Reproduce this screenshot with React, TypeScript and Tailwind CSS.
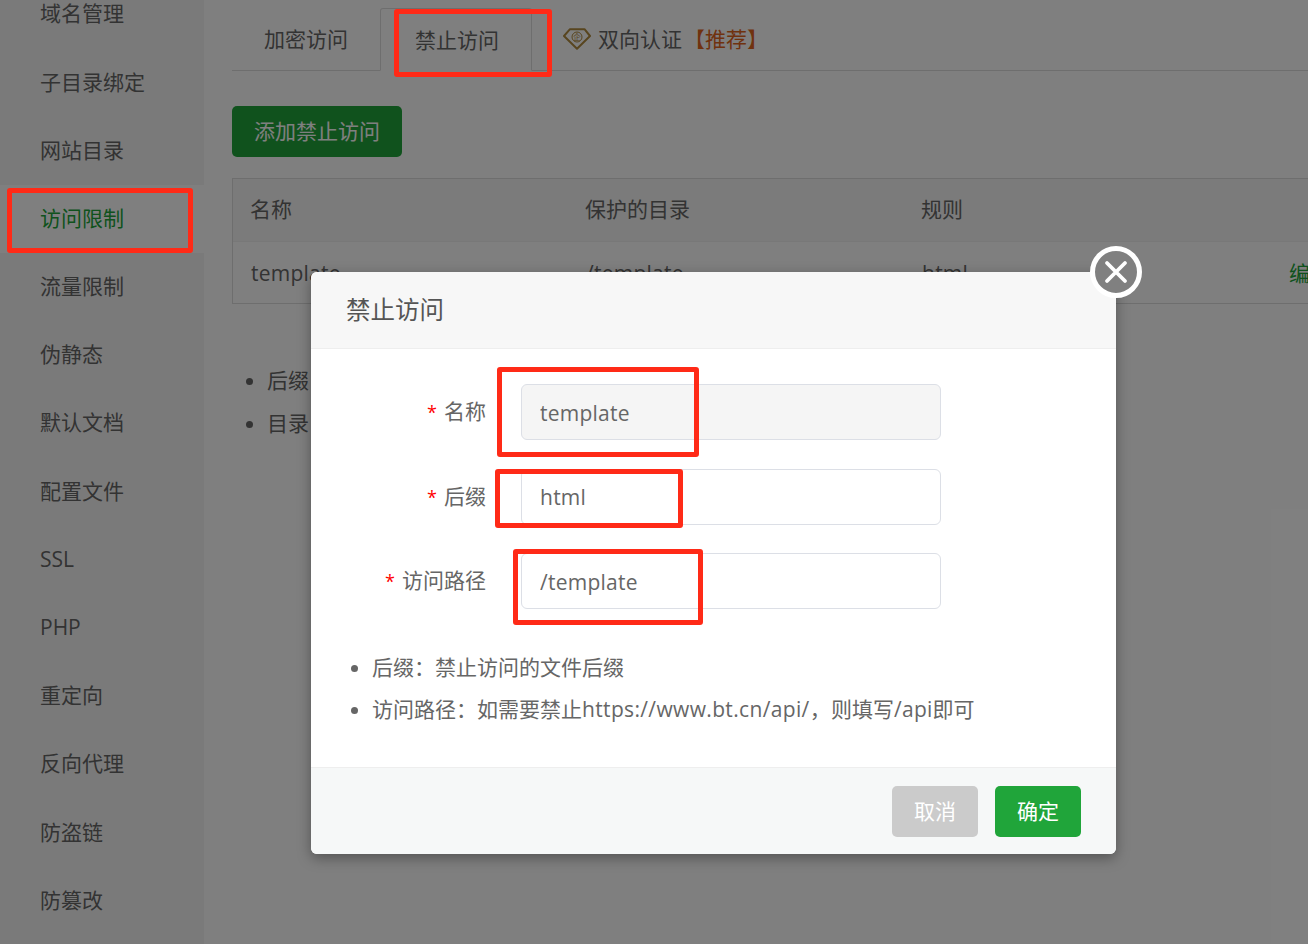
const sideItems = ['域名管理','子目录绑定','网站目录','访问限制','流量限制','伪静态','默认文档','配置文件','SSL','PHP','重定向','反向代理','防盗链','防篡改',''];

function Field({ label, value, disabled }: { label: string; value: string; disabled?: boolean }) {
  return (
    <div className="flex items-center h-[56px]">
      <label className="w-[175px] text-right text-[21px] text-[#666] shrink-0">
        <span className="text-[#f00] text-[18px] mr-[7px]">*</span>{label}
      </label>
      <input readOnly value={value} className={`ml-[35px] w-[420px] h-[56px] border border-[#dcdfe6] rounded-[6px] px-[18px] pt-[1px] text-[21px] tracking-[0.25px] text-[#666] outline-none ${disabled ? 'bg-[#f5f5f5]' : 'bg-white'}`} />
    </div>
  );
}

export default function App() {
  return (
    <div className="relative w-[1308px] h-[944px] overflow-hidden bg-white font-['Open_Sans','Noto_Sans_CJK_SC',sans-serif] text-[21px] text-[#666]">
      <div className="flex h-full">
        <aside className="w-[204px] shrink-0 bg-[#f5f5f5] -mt-[20px] h-[964px]">
          {sideItems.map((s, i) => (
            <div key={i} className={`h-[68.2px] flex items-center pl-[40px] ${s === '访问限制' ? 'bg-white text-[#20a53a]' : ''}`}>{s}</div>
          ))}
        </aside>
        <main className="flex-1 pl-[28px] pt-[8px] min-w-0">
          <div className="flex h-[63px] border-b border-[#ddd]">
            <div className="w-[148px] pl-[32px] pt-[2px] flex items-center">加密访问</div>
            <div className="w-[152px] h-[63px] pl-[34px] pt-[2px] flex items-center border border-[#ddd] border-b-white rounded-t-[3px] bg-white">禁止访问</div>
            <div className="flex items-center pl-[31px] pt-[2px]">
              <svg width="28" height="22" viewBox="0 0 28 22" fill="none" className="mr-[7px] -mt-[2px]">
                <path d="M7 1.2H21.5L27 8L14 20.8L1 8Z" stroke="#b08a3e" strokeWidth="2" strokeLinejoin="round" />
                <circle cx="14" cy="9" r="5" stroke="#b08a3e" strokeWidth="1" />
                <text x="14" y="12" fontSize="7.5" textAnchor="middle" fill="#b08a3e">企</text>
              </svg>
              <span>双向认证</span><span className="text-[#e0641c] ml-[2px]">【推荐】</span>
            </div>
          </div>
          <button className="mt-[35px] w-[170px] h-[51px] bg-[#20a53a] text-white rounded-[5px] block">添加禁止访问</button>
          <div className="mt-[21px] w-[1100px] border border-[#ddd] border-r-0">
            <div className="flex items-center h-[63px] bg-[#f6f6f6] pl-[17px] border-b border-[#f0f0f0]">
              <div className="w-[335px]">名称</div>
              <div className="w-[336px]">保护的目录</div>
              <div>规则</div>
            </div>
            <div className="flex items-center h-[61px] pl-[18px] pt-[3px] tracking-[0.25px]">
              <div className="w-[335px]">template</div>
              <div className="w-[336px]">/template</div>
              <div className="w-[367px]">html</div>
              <div className="text-[#20a53a]">编辑</div>
            </div>
          </div>
          <ul className="mt-[55px] pl-[35px] list-disc marker:text-[#666]">
            <li className="h-[43px] leading-[43px]">后缀：禁止访问的文件后缀</li>
            <li className="h-[43px] leading-[43px]">目录：规则会在目录中生效</li>
          </ul>
        </main>
      </div>

      <div className="absolute inset-0 bg-black/50" />

      <div className="absolute left-[311px] top-[272px] w-[805px] h-[582px] bg-white rounded-[6px] shadow-[0_4px_14px_rgba(0,0,0,0.35)] flex flex-col">
        <div className="h-[77px] shrink-0 bg-[#f7f7f7] border-b border-[#eee] rounded-t-[6px] pl-[35px] pt-[1px] flex items-center text-[24.5px] text-[#555]">禁止访问</div>
        <div className="flex-1 pt-[35px] flex flex-col gap-[28.5px]">
          <Field label="名称" value="template" disabled />
          <Field label="后缀" value="html" />
          <Field label="访问路径" value="/template" />
          <ul className="list-disc pl-[61px] mt-[8px] marker:text-[#666]">
            <li className="h-[42px] leading-[42px]">后缀：禁止访问的文件后缀</li>
            <li className="h-[42px] leading-[42px]">访问路径：如需要禁止<span className="tracking-[0.35px]">https://www.bt.cn/api/，</span>则填写<span className="tracking-[0.25px]">/api</span>即可</li>
          </ul>
        </div>
        <div className="h-[87px] shrink-0 bg-[#f6f8f8] border-t border-[#eee] rounded-b-[6px] flex items-start justify-end gap-[17px] pt-[18px] pr-[35px]">
          <button className="w-[86px] h-[51px] bg-[#cbcbcb] text-white rounded-[5px]">取消</button>
          <button className="w-[86px] h-[51px] bg-[#20a53a] text-white rounded-[5px]">确定</button>
        </div>
      </div>

      <div className="absolute left-[1090px] top-[246px] w-[52px] h-[52px] rounded-full border-[5px] border-white bg-[#808080] flex items-center justify-center">
        <svg width="24" height="24" viewBox="0 0 24 24" fill="none" stroke="white" strokeWidth="3.8" strokeLinecap="round">
          <path d="M3 3L21 21M21 3L3 21" />
        </svg>
      </div>

      <div className="absolute left-[7px] top-[188px] w-[186px] h-[65px] border-[5px] border-[#ff2a17] rounded-[3px]" />
      <div className="absolute left-[394px] top-[9px] w-[158px] h-[68px] border-[5px] border-[#ff2a17] rounded-[3px]" />
      <div className="absolute left-[497px] top-[367px] w-[202px] h-[90px] border-[5px] border-[#ff2a17] rounded-[3px]" />
      <div className="absolute left-[495px] top-[469px] w-[188px] h-[59px] border-[5px] border-[#ff2a17] rounded-[3px]" />
      <div className="absolute left-[513px] top-[549px] w-[190px] h-[76px] border-[5px] border-[#ff2a17] rounded-[3px]" />
    </div>
  );
}
